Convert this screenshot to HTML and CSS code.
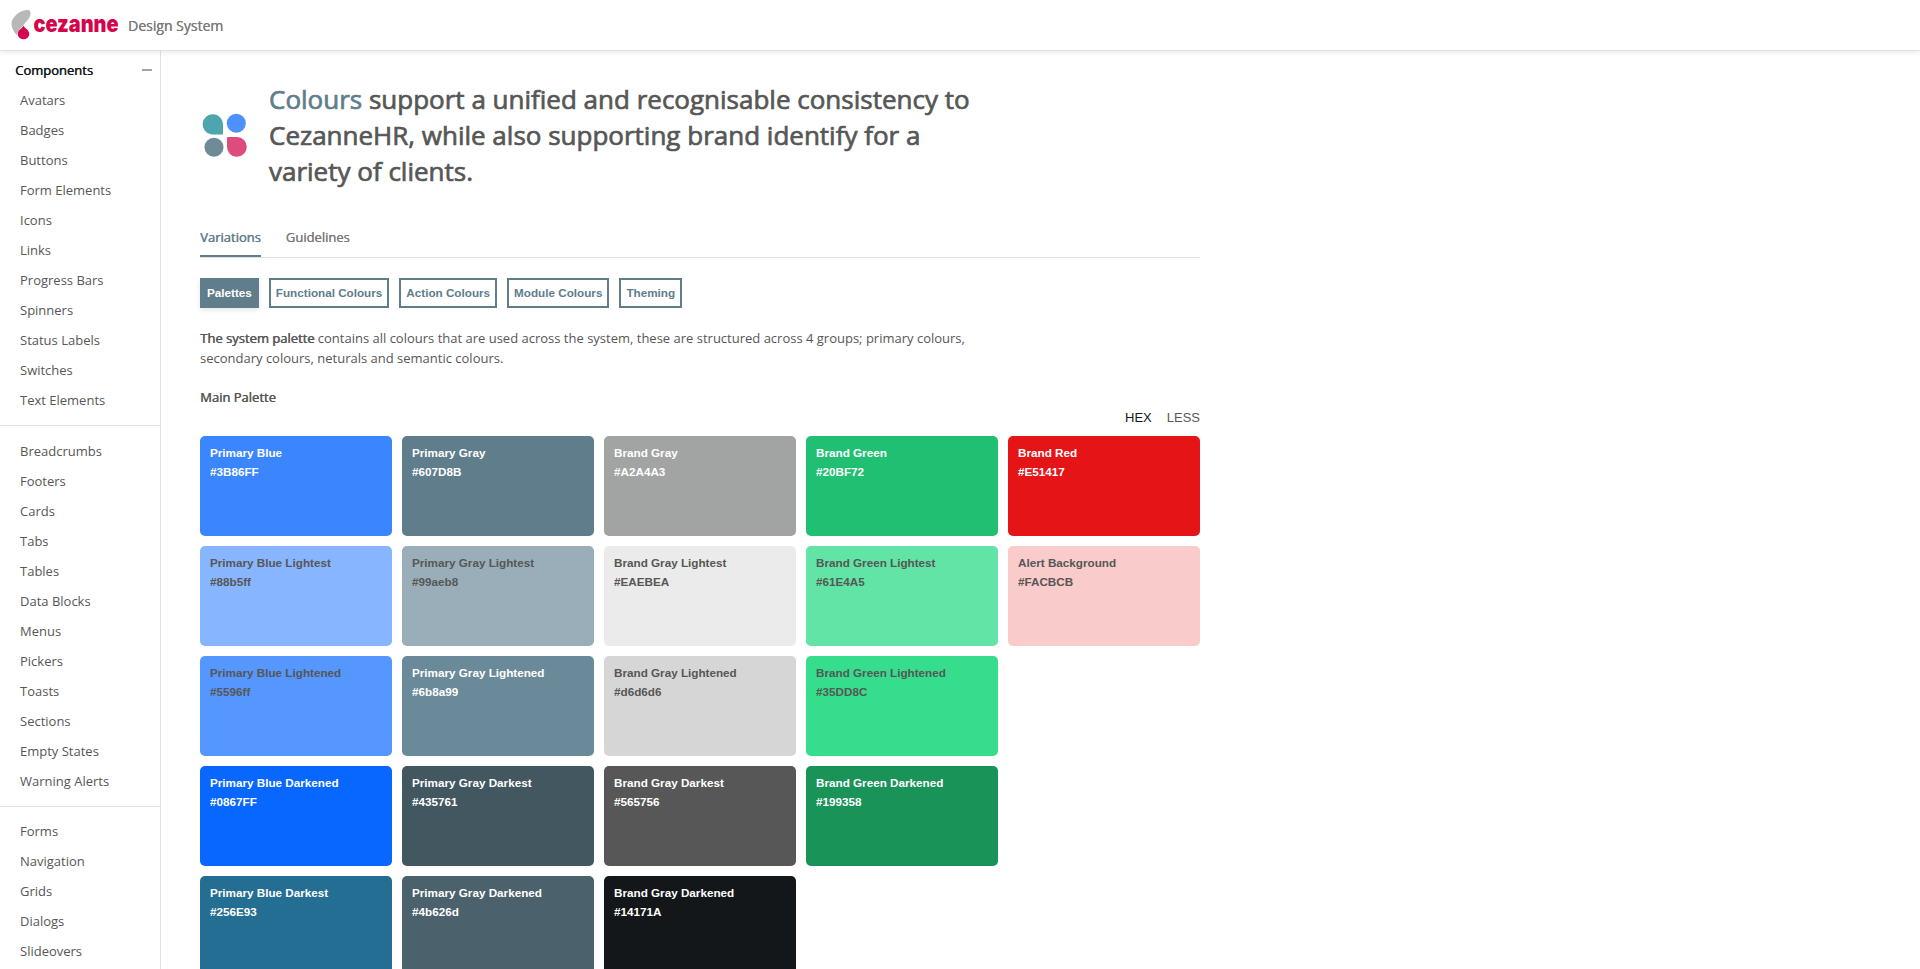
FILE: index.html
```html
<!DOCTYPE html>
<html lang="en">
<head>
<meta charset="utf-8">
<title>Cezanne Design System</title>
<link rel="stylesheet" href="styles.css">
</head>
<body>
<header class="header">
  <svg class="logo" width="110" height="50" viewBox="0 -9 110 50">
    <path d="M18.2 1C21.500 1.200 21 7 18.500 10L10.500 19.500Q7 23 6.700 26C3 22 .8 17 1.700 13C3 7 11 .500 18.200 1Z" fill="#b8b8b8"/>
    <path d="M13.300 16.500C14.500 19.500 19.300 20.500 19.300 25A5.800 5.200 0 0 1 7.700 25C7.700 20.500 12.300 20 13.300 16.500Z" fill="#d4054d"/>
    <text class="logo-text" x="23.500" y="22.600" textLength="85" lengthAdjust="spacingAndGlyphs">cezanne</text>
  </svg>
  <span class="header-title">Design System</span>
</header>
<div class="layout">
  <nav class="sidebar">
    <div class="nav-head"><span>Components</span><i class="minus"></i></div>
    <ul class="nav-group">
      <li>Avatars</li><li>Badges</li><li>Buttons</li><li>Form Elements</li><li>Icons</li><li>Links</li><li>Progress Bars</li><li>Spinners</li><li>Status Labels</li><li>Switches</li><li>Text Elements</li>
    </ul>
    <ul class="nav-group">
      <li>Breadcrumbs</li><li>Footers</li><li>Cards</li><li>Tabs</li><li>Tables</li><li>Data Blocks</li><li>Menus</li><li>Pickers</li><li>Toasts</li><li>Sections</li><li>Empty States</li><li>Warning Alerts</li>
    </ul>
    <ul class="nav-group">
      <li>Forms</li><li>Navigation</li><li>Grids</li><li>Dialogs</li><li>Slideovers</li>
    </ul>
  </nav>
  <main class="content">
    <div class="intro">
      <svg class="intro-icon" width="48" height="46" viewBox="0 0 48 46">
        <path d="M23 21.500H11.500A10.200 10.200 0 1 1 23 12Z" fill="#4fa5ae"/>
        <circle cx="36.300" cy="10.300" r="9.500" fill="#4f90ff"/>
        <circle cx="14" cy="34.300" r="9.500" fill="#708b98"/>
        <path d="M27 25Q27 24 28 24H37A9.900 9.900 0 1 1 27 33.500Z" fill="#de4c7e"/>
      </svg>
      <h1 class="intro-text"><span class="accent">Colours</span> support a unified and recognisable consistency to<br>CezanneHR, while also supporting brand identify for a<br>variety of clients.</h1>
    </div>
    <div class="tabs"><a class="tab active">Variations</a><a class="tab">Guidelines</a></div>
    <div class="pills">
      <button class="pill on">Palettes</button><button class="pill">Functional Colours</button><button class="pill">Action Colours</button><button class="pill">Module Colours</button><button class="pill">Theming</button>
    </div>
    <p class="desc"><b>The system palette</b> contains all colours that are used across the system, these are structured across 4 groups; primary colours,<br>secondary colours, neturals and semantic colours.</p>
    <h2 class="sub">Main Palette</h2>
    <div class="formats"><span class="current">HEX</span><span>LESS</span></div>
    <div class="palette">
      <div class="col">
        <div class="swatch" style="background:#3B86FF">Primary Blue<br>#3B86FF</div>
        <div class="swatch dark" style="background:#88b5ff">Primary Blue Lightest<br>#88b5ff</div>
        <div class="swatch dark" style="background:#5596ff">Primary Blue Lightened<br>#5596ff</div>
        <div class="swatch" style="background:#0867FF">Primary Blue Darkened<br>#0867FF</div>
        <div class="swatch" style="background:#256E93">Primary Blue Darkest<br>#256E93</div>
      </div>
      <div class="col">
        <div class="swatch" style="background:#607D8B">Primary Gray<br>#607D8B</div>
        <div class="swatch dark" style="background:#99aeb8">Primary Gray Lightest<br>#99aeb8</div>
        <div class="swatch" style="background:#6b8a99">Primary Gray Lightened<br>#6b8a99</div>
        <div class="swatch" style="background:#435761">Primary Gray Darkest<br>#435761</div>
        <div class="swatch" style="background:#4b626d">Primary Gray Darkened<br>#4b626d</div>
      </div>
      <div class="col">
        <div class="swatch" style="background:#A2A4A3">Brand Gray<br>#A2A4A3</div>
        <div class="swatch dark" style="background:#EAEBEA">Brand Gray Lightest<br>#EAEBEA</div>
        <div class="swatch dark" style="background:#d6d6d6">Brand Gray Lightened<br>#d6d6d6</div>
        <div class="swatch" style="background:#565756">Brand Gray Darkest<br>#565756</div>
        <div class="swatch" style="background:#14171A">Brand Gray Darkened<br>#14171A</div>
      </div>
      <div class="col">
        <div class="swatch" style="background:#20BF72">Brand Green<br>#20BF72</div>
        <div class="swatch dark" style="background:#61E4A5">Brand Green Lightest<br>#61E4A5</div>
        <div class="swatch dark" style="background:#35DD8C">Brand Green Lightened<br>#35DD8C</div>
        <div class="swatch" style="background:#199358">Brand Green Darkened<br>#199358</div>
      </div>
      <div class="col">
        <div class="swatch" style="background:#E51417">Brand Red<br>#E51417</div>
        <div class="swatch dark" style="background:#FACBCB">Alert Background<br>#FACBCB</div>
      </div>
    </div>
  </main>
</div>
</body>
</html>
```
FILE: styles.css
```css
* { box-sizing: border-box; }
body {
  margin: 0;
  height: 100vh;
  overflow: hidden;
  display: flex;
  flex-direction: column;
  background: #fff;
  color: #565756;
  font-family: "Open Sans", sans-serif;
  font-size: 13px;
}
.header {
  flex: none;
  height: 51px;
  display: flex;
  align-items: center;
  padding-left: 10px;
  border-bottom: 1px solid #e0e1e2;
  box-shadow: 0 2px 5px rgba(0, 0, 0, .08);
  position: relative;
}
.logo { display: block; flex: none; overflow: visible; }
.logo-text { font: 900 23px Inter, sans-serif; fill: #d4054d; }
.header-title { margin-left: 8px; padding-top: 2px; font-size: 14px; color: #7a7a7a; text-shadow: .3px 0 currentColor; line-height: 20px; }
.layout { flex: 1; min-height: 0; display: flex; }
.sidebar { flex: none; width: 161px; border-right: 1px solid #e0e1e2; padding-top: 4px; overflow: hidden; }
.nav-head {
  height: 30px;
  display: flex;
  align-items: center;
  justify-content: space-between;
  padding: 0 8px 0 15px;
  color: #14171a;
  text-shadow: .5px 0 currentColor;
}
.minus { width: 10px; height: 2px; background: #a2a4a3; }
.nav-group { list-style: none; margin: 0; padding: 0 0 10px 20px; border-bottom: 1px solid #e0e1e2; }
.nav-group + .nav-group { padding-top: 10px; }
.nav-group + .nav-group:last-child { padding-top: 9px; border-bottom: 0; }
.nav-group li { height: 30px; line-height: 30px; }
.content { width: 1000px; margin-left: 39px; padding-top: 30px; }
.intro { display: flex; align-items: center; height: 108px; }
.intro-icon { flex: none; margin: 2px 21px 0 0; }
.intro-text { margin: 0; font-size: 26px; font-weight: 400; line-height: 36px; -webkit-text-stroke: .7px; white-space: nowrap; }
.accent { color: #607d8b; }
.tabs { display: flex; gap: 25px; height: 41px; margin-top: 28px; border-bottom: 1px solid #e0e1e2; }
.tab { height: 40px; line-height: 40px; color: #7a7a7a; text-shadow: .3px 0 currentColor; }
.tab.active { color: #607d8b; border-bottom: 2px solid #607d8b; text-shadow: .5px 0 currentColor; }
.pills { display: flex; gap: 10px; margin-top: 20px; }
.pill {
  height: 30px;
  margin: 0;
  padding: 0 5px 2px;
  background: #fff;
  border: 2px solid #607d8b;
  color: #607d8b;
  font: bold 11.7px "Liberation Sans", Arial, sans-serif;
}
.pill.on { background: #607d8b; color: #fff; box-shadow: 0 2px 5px rgba(0, 0, 0, .1); }
.desc { margin: 20px 0 0; line-height: 20px; white-space: nowrap; }
.desc b { font-weight: 400; text-shadow: .6px 0 currentColor; }
.sub { margin: 19px 0 0; font-size: 13px; font-weight: 400; line-height: 20px; text-shadow: .5px 0 currentColor; }
.formats { display: flex; justify-content: flex-end; gap: 15px; font: 13px/20px "Liberation Sans", Arial, sans-serif; margin: 1px 0 8px; }
.formats .current { color: #14171a; }
.palette { display: flex; gap: 10px; }
.col { display: flex; flex-direction: column; gap: 10px; width: 192px; }
.swatch {
  height: 100px;
  padding: 7px 10px;
  border-radius: 5px;
  color: #fff;
  font: bold 11.7px/19px "Liberation Sans", Arial, sans-serif;
}
.swatch.dark { color: #565756; }
```
